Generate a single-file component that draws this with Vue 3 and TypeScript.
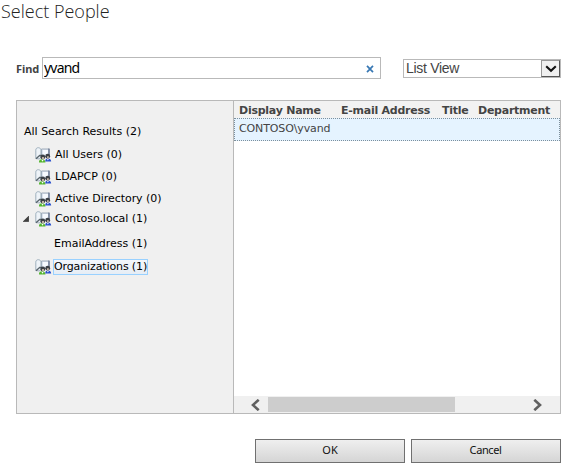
<script setup lang="ts">
import { ref } from 'vue'

interface TreeNode {
  key: string
  label: string
  count: number
  level: number
  expanded?: boolean
}

const query = ref('yvand')
const selected = ref('org')
const nodes: TreeNode[] = [
  { key: 'all', label: 'All Search Results', count: 2, level: 0 },
  { key: 'users', label: 'All Users', count: 0, level: 1 },
  { key: 'ldap', label: 'LDAPCP', count: 0, level: 1 },
  { key: 'ad', label: 'Active Directory', count: 0, level: 1 },
  { key: 'contoso', label: 'Contoso.local', count: 1, level: 1, expanded: true },
  { key: 'email', label: 'EmailAddress', count: 1, level: 2 },
  { key: 'org', label: 'Organizations', count: 1, level: 1 },
]
const columns = [
  { key: 'name', label: 'Display Name' },
  { key: 'mail', label: 'E-mail Address' },
  { key: 'job', label: 'Title' },
  { key: 'dept', label: 'Department' },
]
</script>

<template>
  <main class="dialog">
    <h1 class="title">Select People</h1>
    <div class="search">
      <label class="find" for="find">Find</label>
      <div class="field">
        <input id="find" v-model="query" type="text" />
        <svg class="clear" width="8" height="8" viewBox="0 0 8 8">
          <path d="M1 0.8 7 7.2M7 0.8 1 7.2" fill="none" stroke="#3878b4" stroke-width="1.7" />
        </svg>
      </div>
      <div class="select">
        <span class="value">List View</span>
        <span class="drop">
          <svg width="12" height="8" viewBox="0 0 12 8">
            <path d="M1.2 1.2 6 5.8 10.8 1.2" fill="none" stroke="#111" stroke-width="2.1" />
          </svg>
        </span>
      </div>
    </div>

    <section class="panel">
      <nav class="tree">
        <div v-for="n in nodes" :key="n.key" class="node" :class="['level' + n.level, n.key]">
          <span v-if="n.level === 1" class="toggle">
            <svg v-if="n.expanded" width="6" height="6" viewBox="0 0 6 6">
              <path d="M5.6 0.2V5.6H0.2Z" fill="#404040" stroke="#222" stroke-width="0.6" />
            </svg>
          </span>
          <svg v-if="n.level === 1" class="icon" width="17" height="16" viewBox="0 0 17 16">
            <path d="M6.5 2h7.5v7.5H6.5z" fill="#dbe3ef" stroke="#a1adbb" />
            <path d="M8 3h5v4.5H8z" fill="#f7faff" />
            <path d="M14 1.5v8" stroke="#4b5878" />
            <path d="M.8 11.5V3.2C.8 1.5 1.8.7 3.3.7S6 1.8 6 3v6.7L4.5 12Z" fill="#eef3f8" stroke="#9fb0bd" />
            <path d="M1 11.8 4.7 8.5h2" fill="none" stroke="#59646c" stroke-width="1.3" />
            <path d="M4 15.6c-.2-2.2 1-3.3 3-3.3s3.5 1.2 3.5 3.3Z" fill="#55b52f" />
            <path d="M10.2 14.5c0-2 .8-3 2.7-3s3.3 1 3.3 3Z" fill="#2a50cc" />
            <circle cx="7.8" cy="10" r="2.4" fill="#3c4146" />
            <circle cx="12.7" cy="9.2" r="2.4" fill="#3c4046" />
            <path d="M7 10h2v2H7zM12 9.3h1.8v2H12z" fill="#c0b0a2" />
            <path d="m6.4 12.7 1.1 2 1.2-2M12 12l.9 1.5.9-1.5" fill="#fff" />
          </svg>
          <span class="label" :class="{ active: selected === n.key }" @click="selected = n.key">{{ n.label }} ({{ n.count }})</span>
        </div>
      </nav>
      <div class="results">
        <div class="head">
          <span v-for="c in columns" :key="c.key" :class="c.key">{{ c.label }}</span>
        </div>
        <div class="row"><span>CONTOSO\yvand</span></div>
        <div class="scroll">
          <svg width="10" height="12" viewBox="0 0 10 12">
            <path d="M8.7 .8 3 6l5.7 5.2" fill="none" stroke="#606060" stroke-width="2.6" />
          </svg>
          <div class="track"><div class="thumb"></div></div>
          <svg width="10" height="12" viewBox="0 0 10 12">
            <path d="M1.3 .8 7 6l-5.7 5.2" fill="none" stroke="#606060" stroke-width="2.6" />
          </svg>
        </div>
      </div>
    </section>

    <footer class="actions">
      <button type="button">OK</button>
      <button type="button" class="cancel">Cancel</button>
    </footer>
  </main>
</template>

<style>
body { background: #fff; }
</style>

<style scoped>
* { box-sizing: border-box; }
.dialog { width: 567px; height: 465px; overflow: hidden; display: flex; flex-direction: column; font-family: "DejaVu Sans", sans-serif; font-size: 11px; color: #222; }
.title { margin: 0; padding-left: 1px; height: 57px; font: 300 18px/23px "Open Sans", sans-serif; color: #222; letter-spacing: 0; white-space: nowrap; }
.search { height: 43px; display: flex; align-items: flex-start; padding-left: 16px; }
.find { width: 26px; padding-top: 5px; font: bold 11px/14px "Noto Sans", sans-serif; letter-spacing: -0.1px; color: #444; white-space: nowrap; }
.field { width: 339px; height: 22px; border: 1px solid #b9b9b9; display: flex; align-items: center; padding-right: 6px; }
.field input { flex: 1; min-width: 0; height: 20px; border: 0; outline: 0; padding: 0 0 0 1px; background: transparent; font: 14px/20px "Noto Sans", sans-serif; letter-spacing: -0.8px; color: #000; }
.clear { position: relative; top: 1px; }
.select { margin: 2px 0 0 22px; width: 158px; height: 19px; border: 1px solid #b9b9b9; display: flex; justify-content: space-between; }
.value { padding-left: 2px; font: 14px/17px "Liberation Sans", sans-serif; letter-spacing: -0.3px; color: #444; }
.drop { width: 19px; height: 17px; display: flex; align-items: center; justify-content: center; background: #f0f0f0; border: 1px solid #999; border-right-color: #555; border-bottom-color: #555; }
.panel { margin-left: 16px; width: 545px; height: 314px; border: 1px solid #b9b9b9; display: flex; }
.tree { width: 217px; background: #f0f0f0; border-right: 1px solid #b9b9b9; padding-top: 19px; color: #000; }
.node { display: flex; align-items: center; height: 22px; white-space: nowrap; }
.level0 { padding-left: 7px; height: 24px; }
.level1 { padding-left: 6px; }
.level2 { padding-left: 37px; }
.contoso { height: 17px; }
.email { height: 34px; }
.org { height: 11px; }
.toggle { width: 12px; display: flex; align-items: center; }
.icon { flex: none; }
.label { line-height: 14px; padding: 0 1px; border: 1px solid transparent; margin-left: 1px; }
.level0 .label, .level2 .label { margin-left: 0; padding: 0; border: 0; }
.ad .label, .contoso .label { letter-spacing: -0.04px; }
.label.active { margin-left: 1px; padding: 0; border-color: #99d1ff; background: linear-gradient(#f4f7fb, #e6edf5); letter-spacing: -0.12px; }
.results { flex: 1; min-width: 0; display: flex; flex-direction: column; background: #fff; }
.head { height: 17px; background: #f2f2f2; display: flex; padding-left: 5px; font-weight: bold; line-height: 19px; letter-spacing: -0.25px; color: #444; white-space: nowrap; }
.name { width: 102px; }
.mail { width: 101px; }
.job { width: 36px; }
.row { height: 23px; border: 1px dotted #7c8f9c; background: #e5f3ff; padding-left: 4px; line-height: 19px; letter-spacing: -0.12px; color: #444; }
.scroll { margin-top: auto; height: 17px; display: flex; align-items: center; background: #f0f0f0; padding: 0 17px 0 16px; }
.track { flex: 1; height: 15px; margin-left: 8px; }
.thumb { width: 187px; height: 15px; background: #cdcdcd; }
.actions { margin-top: 25px; padding-left: 255px; display: flex; gap: 6px; }
.actions button { width: 150px; height: 24px; padding: 0 0 2px; border: 1px solid #707070; border-radius: 0; background: linear-gradient(#efefef, #d5d5d5); font: 11px/20px "Noto Sans", sans-serif; color: #111; }
.actions .cancel { letter-spacing: -0.4px; padding-right: 1px; }
</style>
